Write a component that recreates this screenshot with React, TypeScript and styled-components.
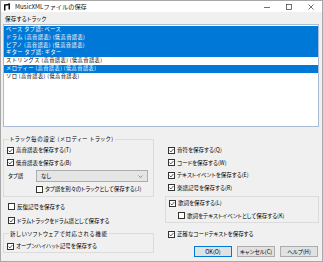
import React from "react";
import styled, { createGlobalStyle } from "styled-components";

const GlobalStyle = createGlobalStyle`
  html, body { margin: 0; padding: 0; }
  body {
    width: 323px;
    height: 262px;
    overflow: hidden;
    background: #f0f0f0;
    font-family: "Noto Sans CJK JP", "Noto Sans", sans-serif;
    font-size: 5.5px;
    font-feature-settings: "palt";
    color: #000;
  }
  * { box-sizing: border-box; }
`;

const Window = styled.div`
  width: 323px;
  height: 262px;
  border: 1px solid #a8a8a8;
  background: #f0f0f0;
  display: flex;
  flex-direction: column;
  overflow: hidden;
`;

const TitleBar = styled.div`
  height: 11px;
  flex: none;
  background: #fff;
  display: flex;
  align-items: center;
  padding-left: 2px;
`;

const TitleText = styled.span`
  margin-left: 4px;
  line-height: 8px;
  font-size: 6.2px;
  font-feature-settings: normal;
  color: #111;
`;

const TitleControls = styled.div`
  margin-left: auto;
  display: flex;
  height: 100%;
`;

const ControlButton = styled.div`
  width: 22px;
  height: 100%;
  display: flex;
  align-items: center;
  justify-content: center;
`;

const Body = styled.div`
  flex: 1;
  display: flex;
  flex-direction: column;
  padding: 2px 3px 0 2px;
`;

const SectionLabel = styled.div`
  height: 10px;
  line-height: 10px;
  padding-left: 2px;
  letter-spacing: 0.3px;
`;

const ListBox = styled.div`
  height: 103px;
  background: #fff;
  border: 1px solid #a9bcd3;
  padding: 1px 0;
`;

const ListRow = styled.div<{ $selected?: boolean }>`
  height: 7.75px;
  line-height: 7.75px;
  padding-left: 2px;
  white-space: nowrap;
  overflow: hidden;
  font-size: 5.3px;
  letter-spacing: 0.35px;
  font-feature-settings: normal;
  background: ${(p) => (p.$selected ? "#0078d7" : "transparent")};
  color: ${(p) => (p.$selected ? "#fff" : "#000")};
`;

const Lower = styled.div`
  display: grid;
  grid-template-columns: 151px 1fr;
  column-gap: 11px;
  margin-top: 8px;
`;

const Column = styled.div<{ $padTop?: number }>`
  display: flex;
  flex-direction: column;
  padding-top: ${(p) => p.$padTop ?? 0}px;
`;

const GroupBox = styled.fieldset<{ $padLeft?: number; $padTop?: number; $marginTop?: number }>`
  margin: ${(p) => p.$marginTop ?? 0}px 0 0 0;
  padding: ${(p) => p.$padTop ?? 1}px 2px 0 ${(p) => p.$padLeft ?? 3}px;
  border: 1px solid #dcdcdc;
  min-width: 0;
`;

const Legend = styled.legend`
  padding: 0 1px;
  margin-left: 2px;
  line-height: 8px;
  letter-spacing: 0.7px;
`;

const CheckRow = styled.label<{ $indent?: number; $height?: number; $marginTop?: number }>`
  display: flex;
  align-items: center;
  height: ${(p) => p.$height ?? 12.5}px;
  margin-top: ${(p) => p.$marginTop ?? 0}px;
  padding-left: ${(p) => p.$indent ?? 0}px;
  white-space: nowrap;
`;

const Box = styled.span`
  width: 7px;
  height: 7px;
  flex: none;
  border: 1px solid #333;
  background: #fff;
  margin-right: 2px;
  display: flex;
  align-items: center;
  justify-content: center;
`;

const ComboRow = styled.div`
  display: flex;
  align-items: center;
  height: 14px;
`;

const ComboLabel = styled.span`
  width: 29px;
  padding-left: 1px;
`;

const Combo = styled.div`
  width: 112px;
  height: 12px;
  border: 1px solid #adadad;
  background: #e5e5e5;
  display: flex;
  align-items: center;
  padding: 0 4px;
  justify-content: space-between;
`;

const ButtonRow = styled.div`
  display: flex;
  justify-content: flex-end;
  gap: 5px;
  margin-top: 5px;
  padding-right: 1px;
`;

const Button = styled.div<{ $default?: boolean }>`
  width: 38px;
  height: 11px;
  border: 1px solid ${(p) => (p.$default ? "#0078d7" : "#adadad")};
  background: #e1e1e1;
  display: flex;
  align-items: center;
  justify-content: center;
  line-height: 8px;
  white-space: nowrap;
`;

const Check = ({ checked }: { checked?: boolean }) => (
  <Box>
    {checked && (
      <svg width="5" height="5" viewBox="0 0 10 10">
        <path d="M1.2 5.2 L3.9 7.9 L8.8 2" fill="none" stroke="#222" strokeWidth="1.5" />
      </svg>
    )}
  </Box>
);

const CheckItem = ({
  label,
  checked,
  indent,
  height,
  marginTop,
}: {
  label: string;
  checked?: boolean;
  indent?: number;
  height?: number;
  marginTop?: number;
}) => (
  <CheckRow $indent={indent} $height={height} $marginTop={marginTop}>
    <Check checked={checked} />
    <span>{label}</span>
  </CheckRow>
);

const tracks: { name: string; selected: boolean }[] = [
  { name: "ベース タブ譜: ベース", selected: true },
  { name: "ドラム (高音譜表) (低高音譜表)", selected: true },
  { name: "ピアノ (高音譜表) (低高音譜表)", selected: true },
  { name: "ギター タブ譜: ギター", selected: true },
  { name: "ストリングス (高音譜表) (低高音譜表)", selected: false },
  { name: "メロディー (高音譜表) (低高音譜表)", selected: true },
  { name: "ソロ (高音譜表) (低高音譜表)", selected: false },
];

export default function App() {
  return (
    <>
      <GlobalStyle />
      <Window>
        <TitleBar>
          <svg width="8" height="8" viewBox="0 0 16 16">
            <path d="M2 3 L14 1 L14 4 L5 5.5 Z" fill="#111" />
            <rect x="2" y="3" width="3" height="12" fill="#111" />
            <rect x="11" y="1" width="3" height="12" fill="#111" />
          </svg>
          <TitleText>MusicXMLファイルの保存</TitleText>
          <TitleControls>
            <ControlButton>
              <svg width="6" height="6" viewBox="0 0 6 6">
                <path d="M0 3.5 H6" stroke="#333" strokeWidth="0.7" />
              </svg>
            </ControlButton>
            <ControlButton>
              <svg width="6" height="6" viewBox="0 0 6 6">
                <rect x="0.5" y="0.5" width="5" height="5" fill="none" stroke="#333" strokeWidth="0.7" />
              </svg>
            </ControlButton>
            <ControlButton>
              <svg width="6" height="6" viewBox="0 0 6 6">
                <path d="M0.5 0.5 L5.5 5.5 M5.5 0.5 L0.5 5.5" stroke="#333" strokeWidth="0.7" />
              </svg>
            </ControlButton>
          </TitleControls>
        </TitleBar>
        <Body>
          <SectionLabel>保存するトラック</SectionLabel>
          <ListBox>
            {tracks.map((t) => (
              <ListRow key={t.name} $selected={t.selected}>
                {t.name}
              </ListRow>
            ))}
          </ListBox>
          <Lower>
            <Column>
              <GroupBox>
                <Legend>トラック毎の設定 (メロディー トラック)</Legend>
                <CheckItem label="高音譜表を保存する(T)" checked />
                <CheckItem label="低音譜表を保存する(B)" checked />
                <ComboRow>
                  <ComboLabel>タブ譜</ComboLabel>
                  <Combo>
                    <span>なし</span>
                    <svg width="5" height="3" viewBox="0 0 10 6">
                      <path d="M1 1 L5 5 L9 1" fill="none" stroke="#555" strokeWidth="1.2" />
                    </svg>
                  </Combo>
                </ComboRow>
                <CheckItem label="タブ譜を別々のトラックとして保存する(J)" indent={29} />
              </GroupBox>
              <Column $padTop={3}>
                <CheckItem label="反復記号を保存する" indent={5} height={14} />
                <CheckItem label="ドラムトラックをドラム譜として保存する" checked indent={5} height={14} />
              </Column>
              <GroupBox $marginTop={2} $padLeft={3} $padTop={3}>
                <Legend>新しいソフトウェアで対応される機能</Legend>
                <CheckItem label="オープンハイハット記号を保存する" checked height={11} />
              </GroupBox>
            </Column>
            <Column $padTop={9}>
              <CheckItem label="音符を保存する(Q)" checked indent={3} />
              <CheckItem label="コードを保存する(W)" checked indent={3} />
              <CheckItem label="テキストイベントを保存する(E)" checked indent={3} />
              <CheckItem label="楽譜記号を保存する(R)" checked indent={3} />
              <GroupBox $marginTop={2} $padLeft={3} $padTop={0}>
                <CheckItem label="歌詞を保存する(L)" checked />
                <CheckItem label="歌詞をテキストイベントとして保存する(K)" indent={9} />
              </GroupBox>
              <CheckItem label="正確なコードテキストを保存する" checked indent={3} height={14} marginTop={4} />
              <ButtonRow>
                <Button $default>OK(O)</Button>
                <Button>キャンセル(C)</Button>
                <Button>ヘルプ(H)</Button>
              </ButtonRow>
            </Column>
          </Lower>
        </Body>
      </Window>
    </>
  );
}
